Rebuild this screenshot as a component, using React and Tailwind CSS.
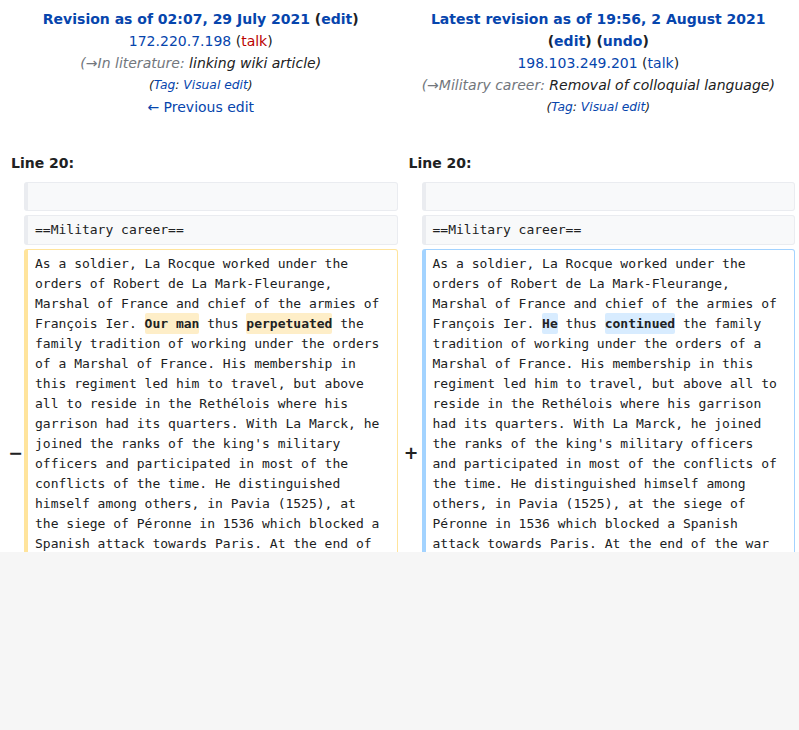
export default function App() {
  const sans = { fontFamily: '"DejaVu Sans", "Noto Sans", sans-serif' };
  const link = "text-[#0645ad]";
  const mono = "font-['DejaVu_Sans_Mono','Liberation_Mono',monospace] text-[13px] leading-[20px] whitespace-pre-wrap break-words";
  const del = "bg-[#feeec8] font-bold rounded-[2px] py-[3px]";
  const add = "bg-[#d8ecff] font-bold rounded-[2px] py-[3px]";
  return (
    <div className="min-h-screen bg-[#f6f6f6]">
      <div
        className="h-[552px] overflow-hidden bg-white text-[#202122] font-['DejaVu_Sans','Noto_Sans',sans-serif]"
        style={sans}
      >
        <div className="grid grid-cols-[16px_1fr_16px_1fr] gap-x-[4px] px-[4px]">
          {/* Headers */}
          <div className="col-span-2 pt-[8px] text-center text-[14px] leading-[22px] px-[4px]">
            <div>
              <span className="font-bold">
                <span className={link}>Revision as of 02:07, 29 July 2021</span>{" "}
                (<span className={link}>edit</span>)
              </span>
            </div>
            <div>
              <span className={link}>172.220.7.198</span> (<span className="text-[#ba0000]">talk</span>)
            </div>
            <div className="italic">
              <span className="text-[#72777d]">(→In literature: </span>linking wiki article)
            </div>
            <div className="italic text-[12.3px]">
              (<span className={link}>Tag</span>: <span className={link}>Visual edit</span>)
            </div>
            <div>
              <span className={link}>← Previous edit</span>
            </div>
          </div>
          <div className="col-span-2 pt-[8px] text-center text-[14px] leading-[22px] px-[4px]">
            <div>
              <span className="font-bold">
                <span className={link}>Latest revision as of 19:56, 2 August 2021</span>{" "}
                <span className="whitespace-nowrap">
                  (<span className={link}>edit</span>) (<span className={link}>undo</span>)
                </span>
              </span>
            </div>
            <div>
              <span className={link}>198.103.249.201</span> (<span className={link}>talk</span>)
            </div>
            <div className="italic">
              <span className="text-[#72777d]">(→Military career: </span>Removal of colloquial language)
            </div>
            <div className="italic text-[12.3px]">
              (<span className={link}>Tag</span>: <span className={link}>Visual edit</span>)
            </div>
          </div>

          {/* Line numbers */}
          <div className="col-span-2 mt-[34px] mb-[8px] pl-[7px] text-[14px] leading-[22px] font-bold">Line 20:</div>
          <div className="col-span-2 mt-[34px] mb-[8px] pl-[7px] text-[14px] leading-[22px] font-bold">Line 20:</div>

          {/* Empty context row */}
          <div></div>
          <div className="h-[29px] mb-[4px] bg-[#f8f9fa] border border-[#eaecf0] border-l-4 rounded-[3px]"></div>
          <div></div>
          <div className="h-[29px] mb-[4px] bg-[#f8f9fa] border border-[#eaecf0] border-l-4 rounded-[3px]"></div>

          {/* Heading context row */}
          <div></div>
          <div className={`h-[30px] mb-[4px] bg-[#f8f9fa] border border-[#eaecf0] border-l-4 rounded-[3px] pl-[7px] py-[4px] ${mono}`}>
            ==Military career==
          </div>
          <div></div>
          <div className={`h-[30px] mb-[4px] bg-[#f8f9fa] border border-[#eaecf0] border-l-4 rounded-[3px] pl-[7px] py-[4px] ${mono}`}>
            ==Military career==
          </div>

          {/* Changed row */}
          <div className="flex items-center justify-end text-[17.5px] font-bold leading-[21px] -mr-[3px]">−</div>
          <div className={`min-h-[408px] border border-[#ffe49c] border-l-4 rounded-[3px] pl-[7px] pr-[12px] py-[4px] ${mono}`}>
            As a soldier, La Rocque worked under the orders of Robert de La Mark-Fleurange, Marshal of France and chief of the armies of François Ier. <span className={del}>Our man</span> thus <span className={del}>perpetuated</span> the family tradition of working under the orders of a Marshal of France. His membership in this regiment led him to travel, but above all to reside in the Rethélois where his garrison had its quarters. With La Marck, he joined the ranks of the king's military officers and participated in most of the conflicts of the time. He distinguished himself among others, in Pavia (1525), at the siege of Péronne in 1536 which blocked a Spanish attack towards Paris. At the end of the war
          </div>
          <div className="flex items-center justify-end text-[17.5px] font-bold leading-[21px] -mr-[1px]">+</div>
          <div className={`min-h-[408px] border border-[#a3d3ff] border-l-4 rounded-[3px] pl-[7px] pr-[12px] py-[4px] ${mono}`}>
            As a soldier, La Rocque worked under the orders of Robert de La Mark-Fleurange, Marshal of France and chief of the armies of François Ier. <span className={add}>He</span> thus <span className={add}>continued</span> the family tradition of working under the orders of a Marshal of France. His membership in this regiment led him to travel, but above all to reside in the Rethélois where his garrison had its quarters. With La Marck, he joined the ranks of the king's military officers and participated in most of the conflicts of the time. He distinguished himself among others, in Pavia (1525), at the siege of Péronne in 1536 which blocked a Spanish attack towards Paris. At the end of the war
          </div>
        </div>
      </div>
    </div>
  );
}
